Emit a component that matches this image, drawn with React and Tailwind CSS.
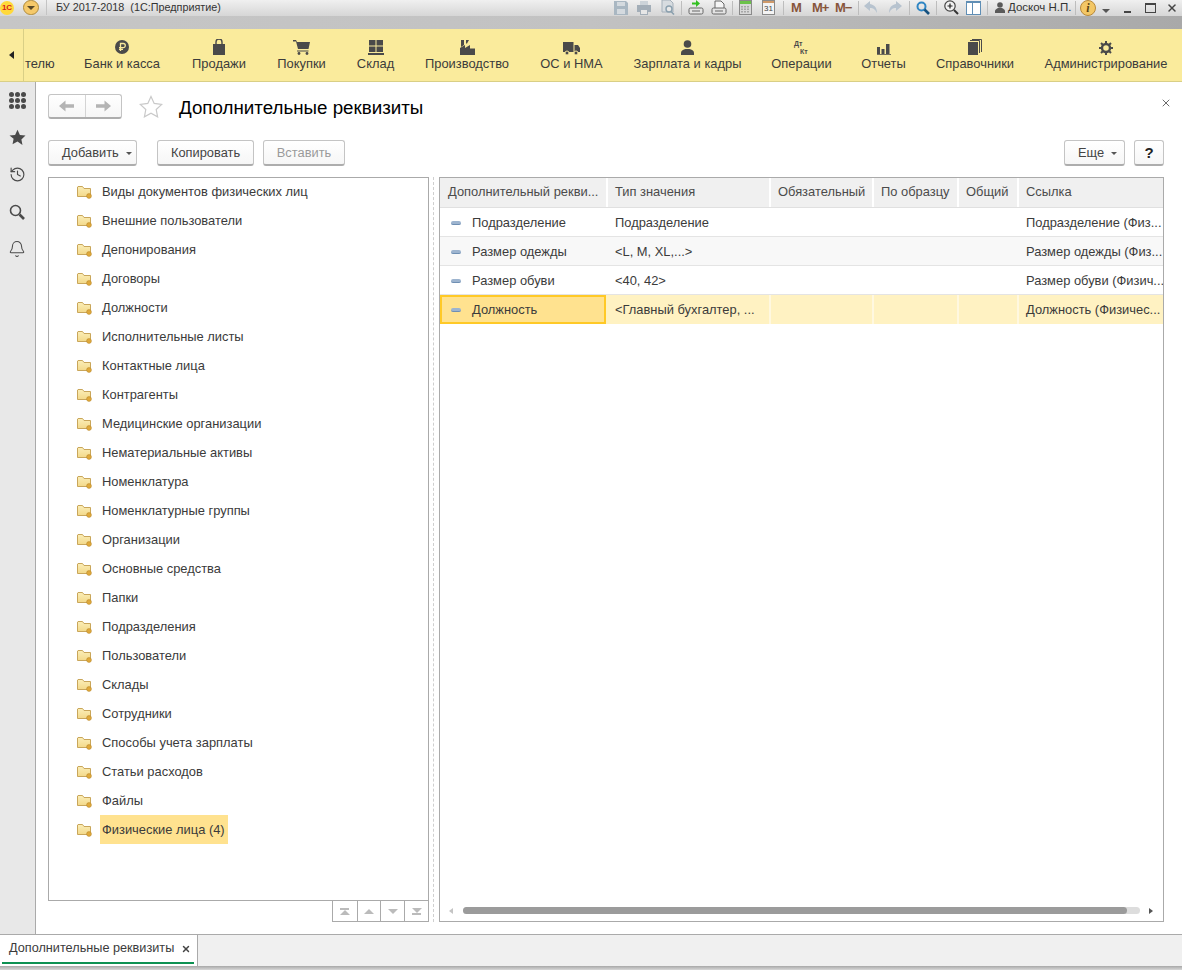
import { History, Bell, X } from "lucide-react";

const font = "font-['Liberation_Sans',Arial,sans-serif]";

const folders = [
  "Виды документов физических лиц", "Внешние пользователи", "Депонирования", "Договоры", "Должности",
  "Исполнительные листы", "Контактные лица", "Контрагенты", "Медицинские организации", "Нематериальные активы",
  "Номенклатура", "Номенклатурные группы", "Организации", "Основные средства", "Папки", "Подразделения",
  "Пользователи", "Склады", "Сотрудники", "Способы учета зарплаты", "Статьи расходов", "Файлы",
];

const rows = [
  ["Подразделение", "Подразделение", "Подразделение (Физ..."],
  ["Размер одежды", "<L, M, XL,...>", "Размер одежды (Физ..."],
  ["Размер обуви", "<40, 42>", "Размер обуви (Физич..."],
];

const gridCols = "grid grid-cols-[168px_163px_103px_85px_60px_1fr]";

const Svg = ({ w = 20, h = 20, box = "0 0 20 20", children }) => (
  <svg width={w} height={h} viewBox={box} className="shrink-0">{children}</svg>
);

const navItems = [
  ["Банк и касса", "w-[78px]", <Svg w={16} h={16} box="0 0 16 16"><circle cx="8" cy="8" r="7" fill="#4a4a4a" /><path d="M6.5 12V4.5h2.7a2 2 0 0 1 0 4.2H5M5 10.4h4" stroke="#f9e99a" strokeWidth="1.3" fill="none" /></Svg>],
  ["Продажи", "w-[54px]", <Svg w={14} h={16} box="0 0 14 16"><path d="M1 5h12v11H1z" fill="#4a4a4a" /><path d="M4 8V3a3 3 0 0 1 6 0v5" stroke="#4a4a4a" strokeWidth="1.4" fill="none" /></Svg>],
  ["Покупки", "w-[49px]", <Svg w={17} h={16} box="0 0 17 16"><path d="M0 1h3l1 2h13l-1.5 7H5L3 2.5H0z" fill="#4a4a4a" /><path d="M4 11.5h11.5v1H4z" fill="#4a4a4a" /><circle cx="6" cy="14.5" r="1.4" fill="#4a4a4a" /><circle cx="14" cy="14.5" r="1.4" fill="#4a4a4a" /></Svg>],
  ["Склад", "w-[37px]", <Svg w={16} h={15} box="0 0 16 15"><path d="M1 0h6.5v5.5H1zM8.5 0H15v5.5H8.5zM1 6.5h6.5V12H1zM8.5 6.5H15V12H8.5zM0 13h16v2H0z" fill="#4a4a4a" /></Svg>],
  ["Производство", "w-[84px]", <Svg w={15} h={15} box="0 0 15 15"><path d="M0 15V8l5 -3v3l5-3v3.5h5V15z" fill="#4a4a4a" /><path d="M1 0h3v5L1 7zM6 0h3L7 3.5H6z" fill="#4a4a4a" /></Svg>],
  ["ОС и НМА", "w-[63px]", <Svg w={17} h={13} box="0 0 17 13"><path d="M0 0h10.5v10H0zM11.5 3H15l2 3v4h-5.5z" fill="#4a4a4a" /><circle cx="4" cy="11" r="2" fill="#4a4a4a" stroke="#f9e99a" /><circle cx="13" cy="11" r="2" fill="#4a4a4a" stroke="#f9e99a" /></Svg>],
  ["Зарплата и кадры", "w-[107px]", <Svg w={13} h={15} box="0 0 13 15"><circle cx="6.5" cy="4" r="3.8" fill="#4a4a4a" /><path d="M0 15v-2.5c0-2 2.5-3 4.5-3.5h4c2 .5 4.5 1.5 4.5 3.5V15z" fill="#4a4a4a" /></Svg>],
  ["Операции", "w-[59px]", <span className="relative block h-[15px] w-[15px] text-[7px] font-bold leading-none text-[#4a4a4a]"><span className="absolute left-0 top-0">Дт</span><span className="absolute left-[6px] top-[8px]">Кт</span></span>],
  ["Отчеты", "w-[43px]", <Svg w={14} h={11} box="0 0 14 11"><path d="M0 3h3v7H0zM4.5 5h3v5h-3zM9 0h3.5v10H9zM0 10.2h14v.8H0z" fill="#4a4a4a" /></Svg>],
  ["Справочники", "w-[78px]", <Svg w={14} h={16} box="0 0 14 16"><path d="M0 3h10v13H0z" fill="#4a4a4a" /><path d="M2 1.5h9.5V14M4 .5h9.5V13" stroke="#4a4a4a" strokeWidth="1" fill="none" /></Svg>],
  ["Администрирование", "w-[122px]", <Svg w={14} h={14} box="0 0 14 14"><circle cx="7" cy="7" r="4" fill="none" stroke="#4a4a4a" strokeWidth="2.4" /><path d="M7 0v3M7 11v3M0 7h3M11 7h3M2 2l2 2M10 10l2 2M12 2l-2 2M4 10l-2 2" stroke="#4a4a4a" strokeWidth="2" /></Svg>],
];

function Sep({ ml }) {
  return <span className={`h-[14px] w-px shrink-0 bg-[#bdbdbd] ${ml}`} />;
}

const tray = (
  <>
    <rect x="1" y="8" width="14" height="6" rx="1.5" fill="#e4e4e4" stroke="#666" />
    <path d="M4 11h8" stroke="#666" />
  </>
);

function TopBar() {
  return (
    <div className="relative h-[29px] shrink-0">
      <div className="h-[16px] bg-gradient-to-b from-[#f0f0f0] to-[#d6d6d6]" />
      <div className="h-[13px] bg-gradient-to-r from-[#c6c6c6] via-[#c2c2c2] to-[#a9a9a9]" />
      <div className="absolute inset-x-0 top-0 flex h-[15px] items-center">
        <span className="flex h-[14px] w-[14px] items-center justify-center rounded-full bg-[#ffd93b] text-[8px] font-bold leading-none text-[#d8201c]">1С</span>
        <span className="ml-[9px] flex h-[15px] w-[16px] items-center justify-center rounded-full border border-[#b08c3c] bg-[#f5c96a]">
          <span className="h-0 w-0 border-x-[4px] border-t-[4px] border-x-transparent border-t-[#5a4a28]" />
        </span>
        <span className="ml-[7px] h-[15px] w-px bg-[#c4c4c4]" />
        <span className="ml-[9px] text-[10.8px] text-[#333]">БУ 2017-2018&nbsp; (1С:Предприятие)</span>

        <div className="ml-auto flex items-center">
          <Svg w={14} h={14} box="0 0 14 14"><path d="M0 0h12l2 2v12H0z" fill="#a9b7c2" /><path d="M3 1h8v4H3zM3 8h8v5H3z" fill="#d4dadf" /></Svg>
          <span className="ml-[9px]"><Svg w={14} h={14} box="0 0 14 14"><path d="M3 0h8v4H3z" fill="#ccd3d9" /><path d="M0 4h14v7h-3v3H3v-3H0z" fill="#a3aeb8" /><path d="M4 9h6v4H4z" fill="#e6e6e6" /></Svg></span>
          <span className="ml-[10px]"><Svg w={15} h={15} box="0 0 15 15"><path d="M1 0h8l3 3v9H1z" fill="#d7dce0" stroke="#a5b0ba" /><circle cx="8" cy="9" r="3" fill="#e8e8e8" stroke="#8ba0ae" strokeWidth="1.4" /><path d="M10 11.5l3 3" stroke="#8ba0ae" strokeWidth="1.6" /></Svg></span>
          <Sep ml="ml-[5px]" />
          <span className="ml-[6px]"><Svg w={16} h={15} box="0 0 16 15"><path d="M4 2.5h4V0l4 3.5L8 7V4.5H4z" fill="#32c021" />{tray}</Svg></span>
          <span className="ml-[7px]"><Svg w={16} h={15} box="0 0 16 15"><path d="M4 1h6l3 3v5H4z" fill="#f5f5f5" stroke="#666" />{tray}</Svg></span>
          <Sep ml="ml-[5px]" />
          <span className="ml-[6px]"><Svg w={13} h={15} box="0 0 13 15"><rect x=".5" y=".5" width="12" height="14" fill="#d8d8d8" stroke="#8a8a8a" /><rect x="1" y="1" width="11" height="3" fill="#6cc24a" /><path d="M3 6v7M6 6v7M9 6v7" stroke="#777" strokeDasharray="1.5 1" /></Svg></span>
          <span className="ml-[10px] flex h-[15px] w-[13px] flex-col border border-[#8a8a8a] bg-[#f4f4f4]">
            <span className="h-[3px] bg-[#d09a6a]" />
            <span className="text-center text-[8px] leading-[11px] text-[#444]">31</span>
          </span>
          <Sep ml="ml-[8px]" />
          <span className="ml-[7px] w-[21px] text-[13px] font-bold tracking-[-1px] text-[#87553a]">M</span>
          <span className="w-[23px] text-[13px] font-bold tracking-[-1px] text-[#87553a]">M+</span>
          <span className="w-[23px] text-[13px] font-bold tracking-[-1px] text-[#87553a]">M−</span>
          <Sep />
          <span className="ml-[5px]"><Svg w={15} h={13} box="0 0 15 13"><path d="M6 0L0 5l6 5V7c3 0 5 1 7 5 0-5-2-8-7-9z" fill="#b7c3cf" /></Svg></span>
          <span className="ml-[8px]"><Svg w={15} h={13} box="0 0 15 13"><path d="M9 0l6 5-6 5V7c-3 0-5 1-7 5 0-5 2-8 7-9z" fill="#b7c3cf" /></Svg></span>
          <Sep ml="ml-[7px]" />
          <span className="ml-[6px]"><Svg w={14} h={14} box="0 0 14 14"><circle cx="5.5" cy="5.5" r="4" fill="none" stroke="#2f86c4" strokeWidth="2" /><path d="M8.5 8.5l4.5 4.5" stroke="#16527f" strokeWidth="2.6" /></Svg></span>
          <Sep ml="ml-[6px]" />
          <span className="ml-[7px]"><Svg w={15} h={15} box="0 0 15 15"><circle cx="6" cy="6" r="5.2" fill="#f2f2f2" stroke="#444" strokeWidth="1.2" /><path d="M3.5 6h5M6 3.5v5" stroke="#222" strokeWidth="1.2" /><path d="M10 10l4 4" stroke="#333" strokeWidth="2" /></Svg></span>
          <span className="ml-[7px] flex h-[14px] w-[15px] border border-t-2 border-[#5f8eb5] bg-white"><span className="ml-[5px] w-px bg-[#5f8eb5]" /></span>
          <Sep ml="ml-[6px]" />
          <span className="ml-[7px]"><Svg w={10} h={11} box="0 0 10 11"><circle cx="5" cy="3" r="2.8" fill="#5a5a5a" /><path d="M0 11V9c0-1.5 2-2.5 3-3h4c1 .5 3 1.5 3 3v2z" fill="#5a5a5a" /></Svg></span>
          <span className="ml-[3px] w-[61px] whitespace-nowrap text-[11.5px] text-[#333]">Доскоч Н.П.</span>
          <Sep ml="ml-[6px]" />
          <span className="ml-[4px] flex h-[16px] w-[16px] items-center justify-center rounded-full border border-[#b8893a] bg-[#f3c766] font-['Liberation_Serif',serif] text-[12px] font-bold italic leading-none text-[#5a4413]">i</span>
          <span className="ml-[6px] mt-[6px] h-0 w-0 border-x-[4px] border-t-[4px] border-x-transparent border-t-[#555]" />
          <span className="ml-[14px] mt-[8px] h-[2px] w-[7px] bg-[#444]" />
          <span className="ml-[14px] h-[10px] w-[11px] border border-t-2 border-[#444]" />
          <X size={12} strokeWidth={3} className="ml-[10px] mr-[4px] text-[#444]" />
        </div>
      </div>
    </div>
  );
}

function NavBar() {
  return (
    <div className="flex h-[53px] shrink-0 border-b border-[#d9cf86] bg-[#faeb9c] text-[12.9px] text-[#3b3b3b]">
      <div className="flex w-[24px] shrink-0 items-center justify-center border-r border-[#d9cf86]">
        <span className="h-0 w-0 border-y-[4.5px] border-r-[5px] border-y-transparent border-r-[#222]" />
      </div>
      <span className="mt-[27px] w-[28px] shrink-0 pl-[1px] leading-[16px]">телю</span>
      <div className="ml-[31px] flex gap-[31px]">
        {navItems.map(([label, width, icon]) => (
          <div key={label} className={`flex flex-col items-center ${width}`}>
            <div className="flex h-[27px] items-end pb-[1px]">{icon}</div>
            <span className="whitespace-nowrap leading-[16px]">{label}</span>
          </div>
        ))}
      </div>
    </div>
  );
}

function Rail() {
  return (
    <div className="flex w-[36px] shrink-0 flex-col items-center border-r border-[#aaaaaa] bg-[#e8e8e8] pr-[1px] text-[#4a4a4a]">
      <div className="flex h-[37px] items-center">
        <div className="grid grid-cols-3 gap-[1px]">
          {[0, 1, 2, 3, 4, 5, 6, 7, 8].map((i) => <span key={i} className="h-[5px] w-[5px] rounded-full bg-[#4a4a4a]" />)}
        </div>
      </div>
      <div className="flex h-[37px] items-center">
        <Svg w={17} h={17} box="0 0 24 24"><path d="M12 1l3.4 7.3 7.9 1-5.8 5.4 1.5 7.9L12 17.8l-7 3.8 1.5-7.9L.7 9.3l7.9-1z" fill="#4a4a4a" /></Svg>
      </div>
      <div className="flex h-[37px] items-center"><History size={17} strokeWidth={1.6} /></div>
      <div className="flex h-[37px] items-center">
        <Svg w={16} h={16} box="0 0 16 16"><circle cx="6.5" cy="6.5" r="5" fill="none" stroke="#4a4a4a" strokeWidth="1.6" /><path d="M10.5 10.5l4.5 4.5" stroke="#4a4a4a" strokeWidth="2.6" /></Svg>
      </div>
      <div className="flex h-[37px] items-center"><Bell size={18} strokeWidth={1.4} /></div>
    </div>
  );
}

function Btn({ children, className = "", disabled }) {
  return (
    <button className={`flex h-[26px] items-center justify-center rounded-[3px] border border-[#c4c4c4] border-b-2 border-b-[#adadad] bg-gradient-to-b from-white to-[#f6f6f6] pt-[1px] text-[12.85px] ${disabled ? "text-[#9a9a9a]" : "text-[#444]"} ${className}`}>
      {children}
    </button>
  );
}

const Caret = () => <span className="ml-[7px] mt-[1px] h-0 w-0 border-x-[3px] border-t-[3px] border-x-transparent border-t-[#555]" />;

function FolderIcon() {
  return (
    <svg width="15" height="14" viewBox="0 0 15 14" className="shrink-0">
      <defs>
        <linearGradient id="fg" x1="0" y1="0" x2="0" y2="1">
          <stop offset="0" stopColor="#fbeeb8" />
          <stop offset="1" stopColor="#f3d98a" />
        </linearGradient>
      </defs>
      <path d="M.5 2V11.5h13V3.5H7L5.5 1.5H1z" fill="url(#fg)" stroke="#c9a65a" />
      <circle cx="12" cy="11" r="2.4" fill="#e0a93a" stroke="#bb8a2c" strokeWidth=".6" />
    </svg>
  );
}

function FolderRow({ label, selected }) {
  return (
    <div className="flex h-[29px] items-center pl-[28px]">
      <FolderIcon />
      <span className={`ml-[8px] flex h-[29px] items-center whitespace-nowrap px-[2px] ${selected ? "w-[128px] bg-[#ffe28f]" : ""}`}>{label}</span>
    </div>
  );
}

function PagerBtn({ children }) {
  return <span className="flex w-[24px] items-center justify-center border-l border-[#aaaaaa] first:border-l-0">{children}</span>;
}

function Tree() {
  return (
    <div className="flex w-[381px] shrink-0 flex-col">
      <div className="h-[724px] overflow-hidden border border-[#aaaaaa] text-[12.9px] text-[#3b3b3b]">
        <div className="-mt-px">
          {folders.map((f) => <FolderRow key={f} label={f} />)}
          <FolderRow label="Физические лица (4)" selected />
        </div>
      </div>
      <div className="ml-auto flex h-[21px] w-[97px] border border-t-0 border-[#aaaaaa]">
        <PagerBtn><span className="flex flex-col items-center"><span className="h-[2px] w-[9px] bg-[#bbb]" /><span className="h-0 w-0 border-x-[5px] border-b-[5px] border-x-transparent border-b-[#bbb]" /></span></PagerBtn>
        <PagerBtn><span className="h-0 w-0 border-x-[5px] border-b-[5px] border-x-transparent border-b-[#bbb]" /></PagerBtn>
        <PagerBtn><span className="h-0 w-0 border-x-[5px] border-t-[5px] border-x-transparent border-t-[#bbb]" /></PagerBtn>
        <PagerBtn><span className="flex flex-col items-center"><span className="h-0 w-0 border-x-[5px] border-t-[5px] border-x-transparent border-t-[#bbb]" /><span className="h-[2px] w-[9px] bg-[#bbb]" /></span></PagerBtn>
      </div>
    </div>
  );
}

const DashIcon = () => (
  <span className="mr-[11px] h-[4px] w-[10px] shrink-0 rounded-[2px] border-b border-[#6f8fb3] bg-[#9db4cf]" />
);

function HeadCell({ children }) {
  return <div className="flex items-center overflow-hidden whitespace-nowrap border-r-2 border-white pb-[1px] pl-[7px] first:pl-[8px] last:border-r-0">{children}</div>;
}

function Cell({ children, className = "" }) {
  return <div className={`flex items-center overflow-hidden whitespace-nowrap pl-[7px] ${className}`}>{children}</div>;
}

function Table() {
  return (
    <div className="flex h-[745px] min-w-0 flex-1 flex-col border border-[#aaaaaa] text-[12.9px] text-[#3b3b3b]">
      <div className={`${gridCols} h-[30px] border-b border-[#e0e0e0] bg-[#f0f0f0] text-[#4b4b4b]`}>
        <HeadCell>Дополнительный рекви...</HeadCell>
        <HeadCell>Тип значения</HeadCell>
        <HeadCell>Обязательный</HeadCell>
        <HeadCell>По образцу</HeadCell>
        <HeadCell>Общий</HeadCell>
        <HeadCell>Ссылка</HeadCell>
      </div>
      {rows.map((r, i) => (
        <div key={r[0]} className={`${gridCols} h-[29px] border-b border-[#e4e4e4] pt-[1px] ${i === 1 ? "bg-[#f8f8f8]" : ""}`}>
          <Cell className="pl-[11px]"><DashIcon />{r[0]}</Cell>
          <Cell>{r[1]}</Cell>
          <Cell /><Cell /><Cell />
          <Cell>{r[2]}</Cell>
        </div>
      ))}
      <div className={`${gridCols} h-[29px] bg-[#fff2c2]`}>
        <div className="mr-[2px] flex items-center border-2 border-[#ffc926] bg-[#ffe28f] pl-[9px]"><DashIcon />Должность</div>
        <Cell className="border-r-2 border-[#fff8e0]">&lt;Главный бухгалтер, ...</Cell>
        <Cell className="border-r-2 border-[#fff8e0]" /><Cell className="border-r-2 border-[#fff8e0]" /><Cell className="border-r-2 border-[#fff8e0]" />
        <Cell>Должность (Физичес...</Cell>
      </div>
      <div className="mt-auto flex h-[20px] items-center pb-[1px] pl-[9px]">
        <span className="h-0 w-0 border-y-[3.5px] border-r-[4px] border-y-transparent border-r-[#c4c4c4]" />
        <div className="ml-[10px] h-[7px] w-[677px] rounded-full bg-[#dddddd]">
          <div className="h-[7px] w-[664px] rounded-full bg-[#9b9b9b]" />
        </div>
        <span className="ml-[9px] h-0 w-0 border-y-[3.5px] border-l-[4px] border-y-transparent border-l-[#555]" />
      </div>
    </div>
  );
}

function TabBar() {
  return (
    <div className="flex h-[32px] shrink-0 border-t border-[#aaaaaa] bg-[#f0f0f0]">
      <div className="flex w-[198px] flex-col border-r border-[#aaaaaa] bg-white pl-[2px] pr-[3px]">
        <div className="flex flex-1 items-center whitespace-nowrap pl-[7px] text-[12.7px] text-[#3b3b3b]">
          Дополнительные реквизиты
          <X size={10} strokeWidth={3.5} className="ml-[7px] shrink-0 text-[#444]" />
        </div>
        <div className="mb-[2px] h-[2px] bg-[#0d9152]" />
      </div>
    </div>
  );
}

const NavArrow = ({ flip }) => (
  <svg width="15" height="12" viewBox="0 0 15 12" className={flip ? "-scale-x-100" : ""}>
    <path d="M0 6l6.5-5.5V4.2H15v3.6H6.5v3.7z" fill="#b4b4b4" />
  </svg>
);

export default function App() {
  return (
    <div className={`${font} flex h-[970px] w-[1182px] flex-col overflow-hidden bg-white`}>
      <TopBar />
      <NavBar />
      <div className="flex min-h-0 flex-1">
        <Rail />
        <div className="min-w-0 flex-1 pl-[12px] pr-[18px]">
          <div className="flex h-[58px] items-start pt-[12px]">
            <div className="flex h-[25px] w-[74px] rounded-[3px] border border-[#c4c4c4] border-b-2 border-b-[#adadad] bg-gradient-to-b from-white to-[#f6f6f6]">
              <span className="flex w-[37px] items-center justify-center border-r border-[#d4d4d4]"><NavArrow /></span>
              <span className="flex w-[36px] items-center justify-center"><NavArrow flip /></span>
            </div>
            <span className="ml-[17px] mt-[1px]">
              <Svg w={24} h={23} box="0 0 24 23"><path d="M12 1.5l3.2 6.9 7.5 1-5.5 5.1 1.4 7.4L12 18.3l-6.6 3.6 1.4-7.4L1.3 9.4l7.5-1z" fill="none" stroke="#c9c9c9" strokeWidth="1.2" /></Svg>
            </span>
            <h1 className="ml-[16px] mt-[1px] whitespace-nowrap text-[18.75px] leading-[26px] text-black">Дополнительные реквизиты</h1>
            <X size={12} strokeWidth={1.6} className="ml-auto mr-[-8px] mt-[3px] text-[#444]" />
          </div>
          <div className="flex h-[37px] items-start">
            <Btn className="w-[89px] !justify-start pl-[13px]">Добавить<Caret /></Btn>
            <Btn className="ml-[20px] w-[97px]">Копировать</Btn>
            <Btn className="ml-[9px] w-[82px]" disabled>Вставить</Btn>
            <Btn className="ml-auto w-[61px] !justify-start pl-[13px]">Еще<Caret /></Btn>
            <Btn className="ml-[9px] w-[30px]"><span className="text-[15px] font-bold text-[#222]">?</span></Btn>
          </div>
          <div className="flex">
            <Tree />
            <div className="ml-[4px] mr-[3px] w-[1px] border-l border-dashed border-[#cfcfcf]" />
            <div className="ml-[2px] flex min-w-0 flex-1"><Table /></div>
          </div>
        </div>
      </div>
      <TabBar />
      <div className="h-[4px] shrink-0 bg-gradient-to-b from-[#a8a8a8] to-[#d8d8d8]" />
    </div>
  );
}
